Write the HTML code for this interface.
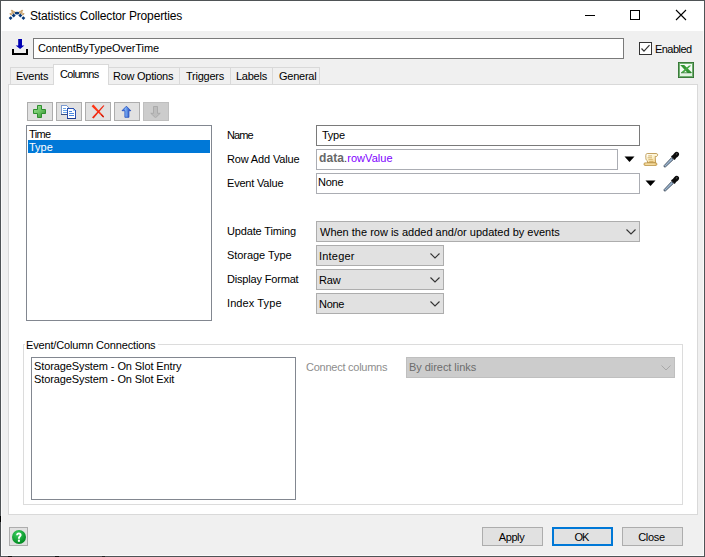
<!DOCTYPE html>
<html><head><meta charset="utf-8">
<style>
*{box-sizing:border-box;margin:0;padding:0}
html,body{width:705px;height:557px;overflow:hidden;background:#f0f0f0}
body{position:relative;font-family:"Liberation Sans",sans-serif;font-size:11px;color:#000}
.a{position:absolute}
.t{position:absolute;white-space:nowrap;line-height:13px;letter-spacing:-0.25px}
.win{left:0;top:0;width:705px;height:557px;border:1px solid #4f5356;background:#f0f0f0}
.title{left:1px;top:1px;width:703px;height:30px;background:#fff}
.tab{position:absolute;background:#f0f0f0;border:1px solid #d9d9d9;border-bottom:none}
.btn{position:absolute;background:#e1e1e1;border:1px solid #adadad}
.box{position:absolute;background:#fff;border:1px solid #7a7a7a}
.cmb{position:absolute;background:#e1e1e1;border:1px solid #adadad}
</style></head><body>
<div class="a win"></div>
<div class="a" style="left:1px;top:31px;width:1px;height:525px;background:#fafafa"></div>
<div class="a" style="left:703px;top:31px;width:1px;height:525px;background:#fafafa"></div>
<div class="a" style="left:1px;top:555px;width:703px;height:1px;background:#fafafa"></div>
<div class="a title"></div>

<!-- title icon -->
<svg class="a" style="left:8px;top:9px" width="18" height="12" viewBox="0 0 18 12"><ellipse cx="4.20" cy="1.90" rx="1.5" ry="0.95" transform="rotate(30 4.20 1.90)" fill="#c9a470"/><ellipse cx="13.80" cy="1.90" rx="1.5" ry="0.95" transform="rotate(-30 13.80 1.90)" fill="#c9a470"/><ellipse cx="6.30" cy="3.10" rx="1.5" ry="0.95" transform="rotate(30 6.30 3.10)" fill="#c9a470"/><ellipse cx="11.70" cy="3.10" rx="1.5" ry="0.95" transform="rotate(-30 11.70 3.10)" fill="#c9a470"/><ellipse cx="2.90" cy="5.10" rx="1.5" ry="0.95" transform="rotate(30 2.90 5.10)" fill="#c9a470"/><ellipse cx="15.10" cy="5.10" rx="1.5" ry="0.95" transform="rotate(-30 15.10 5.10)" fill="#c9a470"/><ellipse cx="4.70" cy="4.00" rx="1.5" ry="0.95" transform="rotate(30 4.70 4.00)" fill="#c9a470"/><ellipse cx="13.30" cy="4.00" rx="1.5" ry="0.95" transform="rotate(-30 13.30 4.00)" fill="#c9a470"/><path d="M0.70 9.10L2.60 7.20L4.50 9.10L2.60 11.00z" fill="#083a7a"/><path d="M3.70 6.40L5.70 4.40L7.70 6.40L5.70 8.40z" fill="#083a7a"/><path d="M10.30 6.40L12.30 4.40L14.30 6.40L12.30 8.40z" fill="#083a7a"/><path d="M13.50 9.10L15.40 7.20L17.30 9.10L15.40 11.00z" fill="#083a7a"/><ellipse cx="9" cy="4.199999999999999" rx="2.3" ry="1.4" fill="#083a7a"/></svg>
<div class="t" style="left:30px;top:9px;font-size:12px;line-height:14px;letter-spacing:-0.15px">Statistics Collector Properties</div>

<!-- title buttons -->
<div class="a" style="left:585px;top:15px;width:10px;height:1px;background:#000"></div>
<div class="a" style="left:630px;top:10px;width:10px;height:10px;border:1px solid #000"></div>
<svg class="a" style="left:675px;top:9px" width="12" height="12" viewBox="0 0 12 12"><path d="M1 1L11 11M11 1L1 11" stroke="#000" stroke-width="1.1"/></svg>

<!-- name row -->
<svg class="a" style="left:11px;top:38px" width="18" height="18" viewBox="0 0 18 18">
<path d="M7.2 1h3.8v6.4h2.4L9.1 11 4.7 7.4h2.5z" fill="#0000b4"/>
<path d="M2 10.9V16H16V10.9" fill="none" stroke="#000" stroke-width="2"/>
</svg>
<div class="box" style="left:33px;top:38px;width:591px;height:21px"></div>
<div class="t" style="left:38px;top:42px;letter-spacing:-0.1px">ContentByTypeOverTime</div>
<div class="a" style="left:639px;top:42px;width:13px;height:13px;border:1px solid #333;background:#fff"></div>
<svg class="a" style="left:639px;top:42px" width="13" height="13" viewBox="0 0 13 13"><path d="M2.5 6.5L5 9.2L10.5 3.2" fill="none" stroke="#333" stroke-width="1.2"/></svg>
<div class="t" style="left:655px;top:43px;letter-spacing:-0.55px">Enabled</div>
<svg class="a" style="left:678px;top:62px" width="16" height="16" viewBox="0 0 16 16">
<rect x="0" y="0" width="16" height="16" fill="#2f6f2f"/>
<rect x="0.8" y="0.8" width="14.4" height="14.4" fill="#6fb06f"/>
<rect x="2" y="2" width="12" height="12" fill="#f4fbf4"/>
<path d="M2.2 3H6.2L13.6 10.3V11H9.6z" fill="#339633"/>
<path d="M13.2 3.4H11L2.8 10.8H5.6z" fill="#45a845"/>
<path d="M3 10.4H13.3V11.4H3z" fill="#2a7a2a"/>
<rect x="2" y="11.6" width="12" height="2.4" fill="#e2f2e2"/>
</svg>

<!-- tabs -->
<div class="a" style="left:8px;top:84px;width:690px;height:431px;background:#fff;border:1px solid #d9d9d9"></div>
<div class="tab" style="left:10px;top:67px;width:44px;height:17px"></div>
<div class="tab" style="left:108px;top:67px;width:72px;height:17px"></div>
<div class="tab" style="left:179px;top:67px;width:52px;height:17px"></div>
<div class="tab" style="left:230px;top:67px;width:43px;height:17px"></div>
<div class="tab" style="left:272px;top:67px;width:48px;height:17px"></div>
<div class="a" style="left:53px;top:64px;width:56px;height:21px;background:#fff;border:1px solid #d9d9d9;border-bottom:none"></div>
<div class="t" style="left:16px;top:70px">Events</div>
<div class="t" style="left:60px;top:68px;letter-spacing:-0.7px">Columns</div>
<div class="t" style="left:113px;top:70px">Row Options</div>
<div class="t" style="left:186px;top:70px">Triggers</div>
<div class="t" style="left:236px;top:70px">Labels</div>
<div class="t" style="left:279px;top:70px">General</div>

<!-- toolbar buttons -->
<div class="btn" style="left:27px;top:102px;width:26px;height:19px"></div>
<div class="btn" style="left:56px;top:102px;width:26px;height:19px"></div>
<div class="btn" style="left:85px;top:102px;width:26px;height:19px"></div>
<div class="btn" style="left:114px;top:102px;width:26px;height:19px"></div>
<div class="btn" style="left:143px;top:102px;width:26px;height:19px;background:#ccc;border-color:#bfbfbf"></div>
<svg class="a" style="left:33px;top:105px" width="13" height="13" viewBox="0 0 13 13">
<defs><linearGradient id="pg" x1="0" y1="0" x2="1" y2="1"><stop offset="0" stop-color="#a6e29e"/><stop offset="0.5" stop-color="#6cc464"/><stop offset="1" stop-color="#2a8a2a"/></linearGradient></defs>
<path d="M4.5 0.5h4v4h4v4h-4v4h-4v-4h-4v-4h4z" fill="url(#pg)" stroke="#2f8f2f" stroke-width="1" stroke-linejoin="miter"/>
</svg>
<svg class="a" style="left:61px;top:104px" width="16" height="15" viewBox="0 0 16 15" shape-rendering="crispEdges">
<path d="M0 1h6v1h1v1h1v8H0z" fill="#7b9bd0"/>
<path d="M1 2h5v1h1v1h0v6H1z" fill="#fff"/>
<path d="M0 10h8v1H0z" fill="#3a4f80"/>
<rect x="2" y="4" width="3" height="1" fill="#6aa6e8"/>
<rect x="2" y="6" width="5" height="1" fill="#6aa6e8"/>
<rect x="2" y="8" width="5" height="1" fill="#6aa6e8"/>
<path d="M6 4h6l1 1h1v1h1v9H6z" fill="#2a4fb0"/>
<path d="M7 5h5v2h2v7H7z" fill="#fff"/>
<path d="M12 5h1v1h1v1h-2z" fill="#9cc0f0"/>
<rect x="8" y="7" width="3" height="1" fill="#4a88e0"/>
<rect x="8" y="9" width="5" height="1" fill="#4a88e0"/>
<rect x="8" y="11" width="5" height="1" fill="#4a88e0"/>
<path d="M6 14h9v1H6z" fill="#1a3a90"/>
</svg>
<svg class="a" style="left:91px;top:104px" width="14" height="15" viewBox="0 0 14 15">
<path d="M0.6 2.2L2.4 0.6L13 12.6L12.2 13.6z" fill="#ff3414"/>
<path d="M13.4 1.8L12.4 1.2L1 13.4L2.6 14.6z" fill="#f02810"/>
<path d="M10.5 10L13 12.6L12.2 13.6L10 11z" fill="#c81a08"/>
</svg>
<svg class="a" style="left:121px;top:105px" width="11" height="13" viewBox="0 0 11 13">
<defs><linearGradient id="ug" x1="0" y1="0" x2="1" y2="0"><stop offset="0" stop-color="#2a5ad0"/><stop offset="0.4" stop-color="#7ab0f8"/><stop offset="1" stop-color="#1a3ab0"/></linearGradient></defs>
<path d="M5.4 1.2L9.8 5.7H7.9V12.3H3.9V5.7H1z" fill="url(#ug)" stroke="#1f4bbf" stroke-width="0.8"/>
</svg>
<svg class="a" style="left:150px;top:106px" width="11" height="12" viewBox="0 0 11 12">
<path d="M3.5 0.5H7.5V7.3H10.2L5.5 11.8L0.8 7.3H3.5z" fill="#bdbdbd" stroke="#a5a5a5" stroke-width="0.8"/>
</svg>

<!-- columns list -->
<div class="box" style="left:26px;top:125px;width:186px;height:196px;border-color:#828790"></div>
<div class="a" style="left:28px;top:140px;width:182px;height:13px;background:#0078d7"></div>
<div class="t" style="left:29px;top:128px;letter-spacing:-0.6px">Time</div>
<div class="t" style="left:29px;top:141px;color:#fff;letter-spacing:0px">Type</div>

<!-- fields -->
<div class="t" style="left:227px;top:129px;letter-spacing:-0.9px">Name</div>
<div class="t" style="left:227px;top:153px;letter-spacing:-0.15px">Row Add Value</div>
<div class="t" style="left:227px;top:177px;letter-spacing:-0.2px">Event Value</div>
<div class="box" style="left:316px;top:125px;width:324px;height:21px"></div>
<div class="t" style="left:322px;top:129px">Type</div>
<div class="box" style="left:316px;top:149px;width:302px;height:21px;border-color:#abadb3"></div>
<div class="t" style="left:319px;top:152px"><b style="color:#686868;font-size:12px;letter-spacing:0.1px">data</b><span style="color:#333;letter-spacing:0.05px">.</span><span style="color:#8000ff;letter-spacing:0.05px">rowValue</span></div>
<div class="box" style="left:316px;top:173px;width:324px;height:21px;border-color:#abadb3"></div>
<svg class="a" style="left:624px;top:156px" width="11" height="7" viewBox="0 0 11 7"><path d="M0.5 0.5h10L5.5 6z" fill="#000"/></svg>
<svg class="a" style="left:645px;top:180px" width="11" height="7" viewBox="0 0 11 7"><path d="M0.5 0.5h10L5.5 6z" fill="#000"/></svg>
<svg class="a" style="left:642px;top:150px" width="18" height="18" viewBox="0 0 18 18">
<defs><linearGradient id="sg" x1="0" y1="0" x2="0.8" y2="1"><stop offset="0" stop-color="#ffffff"/><stop offset="0.5" stop-color="#fdf3cf"/><stop offset="1" stop-color="#f2cf88"/></linearGradient></defs>
<path d="M5.2 3.5H14.2C15.4 3.5 15.9 4.4 15.5 5.5C15.1 6.5 14 6.7 13.2 6.4L13.6 12.8H5.6L5.3 10.8C4.2 10.2 3.8 9 3.8 7.6L3.8 5.5C3.8 4.4 4.4 3.5 5.2 3.5z" fill="url(#sg)" stroke="#b48c3c" stroke-width="0.8"/>
<path d="M13.8 4.6L14.8 5.6L13.6 5.8z" fill="#fff"/>
<path d="M6.2 5.9H10M5.6 7.8H10M6.4 9.7H10.8M7.2 11.6H11.4" stroke="#c9a250" stroke-width="0.8"/>
<path d="M2.8 12.9H14C14.7 12.9 14.9 13.5 14.9 14.2C14.9 14.9 14.6 15.4 14 15.4H2.8C2.2 15.4 2 14.9 2 14.2C2 13.5 2.2 12.9 2.8 12.9z" fill="#f0ce84" stroke="#b48c3c" stroke-width="0.8"/>
<path d="M3.4 14.1H12.8" stroke="#fff4d0" stroke-width="0.7"/>
</svg>
<svg class="a" style="left:663px;top:151px" width="17" height="17" viewBox="0 0 17 17">
<defs><linearGradient id="tg" x1="0" y1="0" x2="1" y2="1"><stop offset="0" stop-color="#d8e6f2"/><stop offset="1" stop-color="#5a7fa8"/></linearGradient></defs>
<path d="M8.6 6.6L10.4 8.4L2.6 15.8L1.2 16L1.1 14.6z" fill="url(#tg)" stroke="#2e3c4c" stroke-width="0.8"/>
<path d="M12.98 7.56L11.56 8.98L8.02 5.44L9.44 4.02z" fill="#0c0c0c"/><ellipse cx="13" cy="4" rx="3.4" ry="2.5" transform="rotate(-45 13 4)" fill="#0c0c0c"/><ellipse cx="13.6" cy="2.8" rx="1" ry="0.6" transform="rotate(-45 13.6 2.8)" fill="#555"/>
</svg>
<svg class="a" style="left:663px;top:175px" width="17" height="17" viewBox="0 0 17 17">
<path d="M8.6 6.6L10.4 8.4L2.6 15.8L1.2 16L1.1 14.6z" fill="url(#tg)" stroke="#2e3c4c" stroke-width="0.8"/>
<path d="M12.98 7.56L11.56 8.98L8.02 5.44L9.44 4.02z" fill="#0c0c0c"/><ellipse cx="13" cy="4" rx="3.4" ry="2.5" transform="rotate(-45 13 4)" fill="#0c0c0c"/><ellipse cx="13.6" cy="2.8" rx="1" ry="0.6" transform="rotate(-45 13.6 2.8)" fill="#555"/>
</svg>
<div class="t" style="left:318px;top:176px">None</div>

<div class="t" style="left:227px;top:225px;letter-spacing:-0.15px">Update Timing</div>
<div class="t" style="left:227px;top:249px;letter-spacing:-0.05px">Storage Type</div>
<div class="t" style="left:227px;top:273px;letter-spacing:-0.18px">Display Format</div>
<div class="t" style="left:227px;top:297px;letter-spacing:0.1px">Index Type</div>

<div class="cmb" style="left:316px;top:221px;width:324px;height:21px"></div>
<div class="t" style="left:320px;top:226px;letter-spacing:0px">When the row is added and/or updated by events</div>
<svg class="a" style="left:626px;top:229px" width="10" height="6" viewBox="0 0 10 6"><path d="M0.5 0.5L5 5L9.5 0.5" fill="none" stroke="#333" stroke-width="1.1"/></svg>
<div class="cmb" style="left:316px;top:245px;width:128px;height:21px"></div>
<div class="t" style="left:319px;top:250px;letter-spacing:0.2px">Integer</div>
<svg class="a" style="left:430px;top:253px" width="10" height="6" viewBox="0 0 10 6"><path d="M0.5 0.5L5 5L9.5 0.5" fill="none" stroke="#333" stroke-width="1.1"/></svg>
<div class="cmb" style="left:316px;top:269px;width:128px;height:21px"></div>
<div class="t" style="left:319px;top:274px;letter-spacing:-0.1px">Raw</div>
<svg class="a" style="left:430px;top:277px" width="10" height="6" viewBox="0 0 10 6"><path d="M0.5 0.5L5 5L9.5 0.5" fill="none" stroke="#333" stroke-width="1.1"/></svg>
<div class="cmb" style="left:316px;top:293px;width:128px;height:21px"></div>
<div class="t" style="left:319px;top:298px;letter-spacing:-0.3px">None</div>
<svg class="a" style="left:430px;top:301px" width="10" height="6" viewBox="0 0 10 6"><path d="M0.5 0.5L5 5L9.5 0.5" fill="none" stroke="#333" stroke-width="1.1"/></svg>

<!-- group box -->
<div class="a" style="left:23px;top:344px;width:660px;height:161px;border:1px solid #dcdcdc"></div>
<div class="a" style="left:25px;top:338px;width:133px;height:13px;background:#fff"></div>
<div class="t" style="left:26px;top:339px;letter-spacing:-0.16px">Event/Column Connections</div>
<div class="box" style="left:31px;top:357px;width:265px;height:143px;border-color:#828790"></div>
<div class="t" style="left:34px;top:360px;letter-spacing:-0.1px">StorageSystem - On Slot Entry</div>
<div class="t" style="left:34px;top:373px;letter-spacing:-0.1px">StorageSystem - On Slot Exit</div>
<div class="t" style="left:306px;top:361px;color:#8d8d8d">Connect columns</div>
<div class="cmb" style="left:406px;top:357px;width:269px;height:21px;background:#ccc;border-color:#bfbfbf"></div>
<div class="t" style="left:409px;top:361px;color:#6d6d6d;letter-spacing:-0.05px">By direct links</div>
<svg class="a" style="left:661px;top:365px" width="10" height="6" viewBox="0 0 10 6"><path d="M0.5 0.5L5 5L9.5 0.5" fill="none" stroke="#a8a8a8" stroke-width="1"/></svg>

<!-- bottom -->
<div class="btn" style="left:9px;top:527px;width:19px;height:19px"></div>
<svg class="a" style="left:12px;top:530px" width="14" height="14" viewBox="0 0 14 14">
<defs><radialGradient id="hg" cx="0.4" cy="0.3" r="0.7"><stop offset="0" stop-color="#3ad060"/><stop offset="1" stop-color="#008a20"/></radialGradient></defs>
<circle cx="7" cy="7" r="7" fill="url(#hg)"/>
<path d="M4.1 5.3C4.1 3.4 5.3 2.4 6.9 2.4S9.6 3.4 9.6 5C9.6 6.7 7.9 6.9 7.9 8.7H5.9C5.9 6.4 7.6 6.1 7.6 5.1C7.6 4.6 7.3 4.2 6.9 4.2S6.1 4.6 6.1 5.3z" fill="#fff"/>
<rect x="5.9" y="9.6" width="2" height="2.2" fill="#fff"/>
</svg>
<div class="btn" style="left:482px;top:527px;width:61px;height:19px"></div>
<div class="t" style="left:481px;top:531px;width:61px;text-align:center;letter-spacing:-0.4px">Apply</div>
<div class="btn" style="left:552px;top:527px;width:61px;height:19px;border:2px solid #0078d7"></div>
<div class="t" style="left:551px;top:531px;width:61px;text-align:center;letter-spacing:-1px">OK</div>
<div class="btn" style="left:622px;top:527px;width:61px;height:19px"></div>
<div class="t" style="left:621px;top:531px;width:61px;text-align:center;letter-spacing:-0.3px">Close</div>
<div class="a" style="left:0;top:516px;width:1px;height:6px;background:#000"></div>
<div class="a" style="left:8px;top:556px;width:4px;height:1px;background:#111"></div>
<div class="a" style="left:55px;top:556px;width:4px;height:1px;background:#111"></div>
<div class="a" style="left:102px;top:556px;width:3px;height:1px;background:#222"></div>
</body></html>
